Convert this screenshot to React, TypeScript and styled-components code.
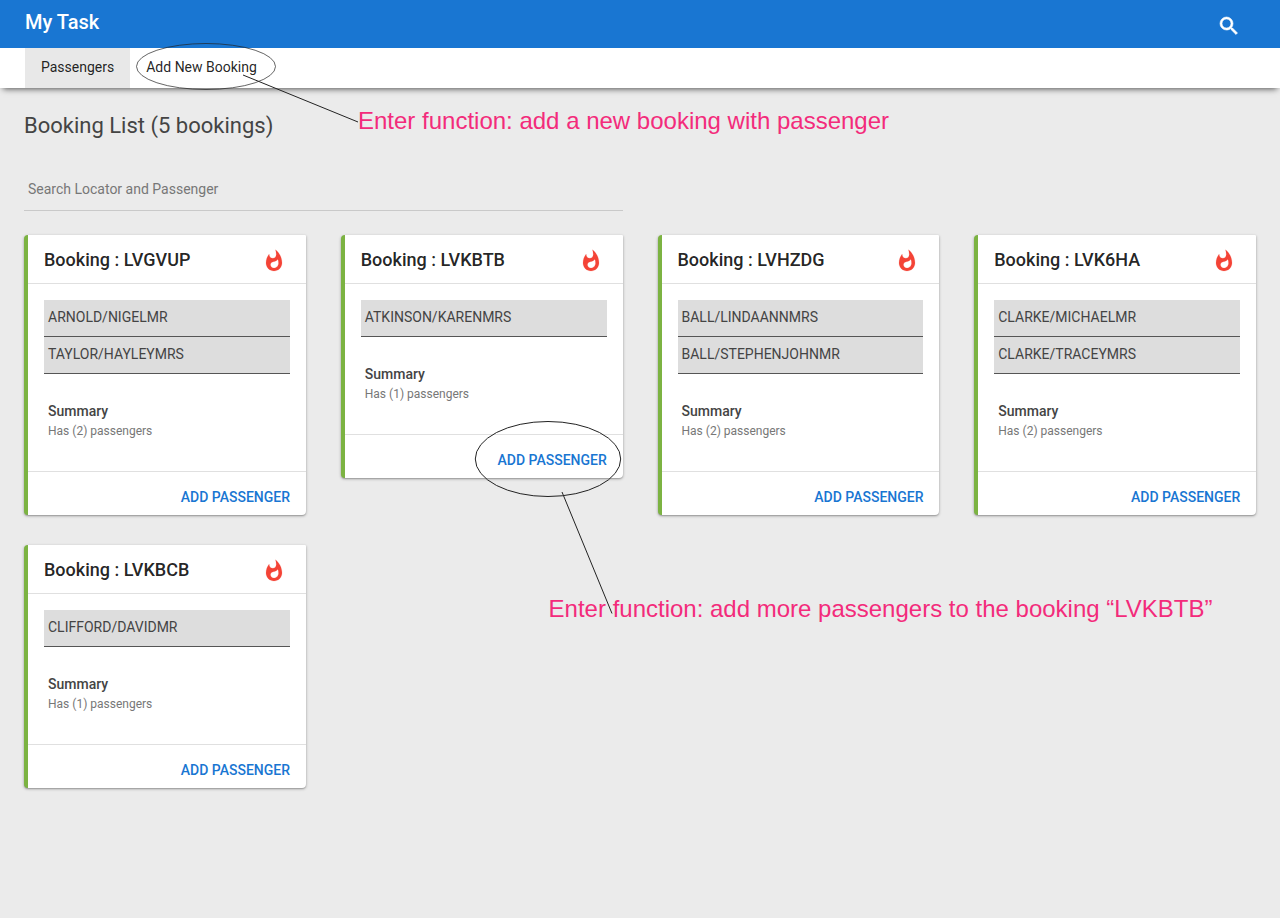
import React from "react";
import styled, { createGlobalStyle } from "styled-components";
import { MdSearch, MdWhatshot } from "react-icons/md";

const GlobalStyle = createGlobalStyle`
  * { box-sizing: border-box; }
  body {
    margin: 0;
    background: #ebebeb;
    font-family: Roboto, "Liberation Sans", sans-serif;
    color: rgba(0, 0, 0, 0.87);
  }
`;

const Page = styled.div`
  position: relative;
  min-height: 918px;
  overflow: hidden;
`;

const Toolbar = styled.header`
  position: relative;
  z-index: 1;
  display: flex;
  align-items: flex-start;
  justify-content: space-between;
  height: 48px;
  padding: 10px 39px 0 25px;
  background: #1976d2;
  color: #fff;
`;

const Brand = styled.h1`
  margin: 0;
  font-size: 20px;
  font-weight: 500;
  line-height: 24px;
`;

const SearchButton = styled.button`
  display: flex;
  margin: 4px 0 0;
  padding: 0;
  border: 0;
  background: none;
  color: inherit;
  path:last-child { stroke: currentColor; stroke-width: 0.6px; }
`;

const Tabs = styled.nav`
  display: flex;
  height: 40px;
  padding-left: 25px;
  background: #fff;
  box-shadow: 0 4px 6px -3px rgba(0, 0, 0, 0.65);
`;

const Tab = styled.a<{ $active?: boolean }>`
  padding: 0 16px;
  background: ${(p) => (p.$active ? "#e8e8e8" : "transparent")};
  font-size: 14px;
  line-height: 39px;
`;

const Content = styled.main`
  padding: 22px 24px 0;
`;

const Heading = styled.h2`
  margin: 0;
  font-size: 22px;
  font-weight: 400;
  line-height: 32px;
  color: #444;
`;

const SearchField = styled.input`
  display: block;
  width: 599px;
  height: 44px;
  margin: 25px 0 24px;
  padding: 0 4px;
  border: 0;
  border-bottom: 1px solid #c9c9c9;
  background: none;
  font: 400 14px Roboto, sans-serif;
  &::placeholder { color: #777; opacity: 1; }
`;

const Cards = styled.section`
  display: grid;
  grid-template-columns: repeat(4, 1fr);
  align-items: start;
  gap: 30px 35px;
`;

const Card = styled.article`
  border-left: 4px solid #7cb342;
  border-radius: 4px 1px 4px 4px;
  background: #fff;
  box-shadow: 0 1px 3px rgba(0, 0, 0, 0.32), 0 1px 1px rgba(0, 0, 0, 0.12);
`;

const CardHeader = styled.header`
  display: flex;
  justify-content: space-between;
  height: 49px;
  padding: 0 20px 0 16px;
  border-bottom: 1px solid #e0e0e0;
  svg { margin-top: 14px; color: #f44336; }
  path:last-child { stroke: currentColor; stroke-width: 0.15px; }
`;

const CardTitle = styled.h3`
  margin: 0;
  font-size: 18px;
  font-weight: 500;
  line-height: 49px;
`;

const CardBody = styled.div`
  padding: 16px 16px 30px;
`;

const Passenger = styled.div`
  height: 37px;
  padding: 0 4px;
  border-bottom: 1px solid #555;
  background: #ddd;
  color: #444;
  font-size: 14px;
  line-height: 34px;
`;

const Summary = styled.div`
  padding: 27px 4px 0;
  color: #777;
  font-size: 12px;
  line-height: 20px;
`;

const SummaryTitle = styled.div`
  color: #444;
  font-size: 14px;
  font-weight: 500;
`;

const CardFooter = styled.footer`
  display: flex;
  justify-content: flex-end;
  height: 44px;
  padding: 14px 15.7px 0 16px;
  border-top: 1px solid #e0e0e0;
`;

const AddButton = styled.button`
  height: 22px;
  padding: 0;
  border: 0;
  background: none;
  color: #1976d2;
  font: 500 14px/22px Roboto, sans-serif;
`;

const Markup = styled.svg`
  position: absolute;
  inset: 0;
  z-index: 2;
  pointer-events: none;
`;

const Note = styled.p<{ $x: number; $y: number }>`
  position: absolute;
  left: ${(p) => p.$x}px;
  top: ${(p) => p.$y}px;
  margin: 0;
  color: #f32b7b;
  font: 24px/28px "Liberation Sans", Arial, sans-serif;
  white-space: nowrap;
`;

const bookings = [
  { locator: "LVGVUP", passengers: ["ARNOLD/NIGELMR", "TAYLOR/HAYLEYMRS"] },
  { locator: "LVKBTB", passengers: ["ATKINSON/KARENMRS"] },
  { locator: "LVHZDG", passengers: ["BALL/LINDAANNMRS", "BALL/STEPHENJOHNMR"] },
  { locator: "LVK6HA", passengers: ["CLARKE/MICHAELMR", "CLARKE/TRACEYMRS"] },
  { locator: "LVKBCB", passengers: ["CLIFFORD/DAVIDMR"] },
];

export default function App() {
  return (
    <Page>
      <GlobalStyle />
      <Toolbar>
        <Brand>My Task</Brand>
        <SearchButton aria-label="Search"><MdSearch size={24} /></SearchButton>
      </Toolbar>
      <Tabs>
        <Tab $active>Passengers</Tab>
        <Tab>Add New Booking</Tab>
      </Tabs>
      <Content>
        <Heading>Booking List ({bookings.length} bookings)</Heading>
        <SearchField placeholder="Search Locator and Passenger" />
        <Cards>
          {bookings.map(({ locator, passengers }) => (
            <Card key={locator}>
              <CardHeader>
                <CardTitle>Booking : {locator}</CardTitle>
                <MdWhatshot size={24} />
              </CardHeader>
              <CardBody>
                {passengers.map((name) => <Passenger key={name}>{name}</Passenger>)}
                <Summary>
                  <SummaryTitle>Summary</SummaryTitle>
                  Has ({passengers.length}) passengers
                </Summary>
              </CardBody>
              <CardFooter><AddButton>ADD PASSENGER</AddButton></CardFooter>
            </Card>
          ))}
        </Cards>
      </Content>
      <Markup width="1280" height="918" fill="none" stroke="#222">
        <ellipse cx="206" cy="66.5" rx="69.5" ry="23" strokeWidth="0.7" />
        <path d="M243 75L358 122" />
        <ellipse cx="548" cy="459" rx="72.7" ry="37.5" />
        <path d="M562 492L612 613.5" />
      </Markup>
      <Note $x={358} $y={107}>Enter function: add a new booking with passenger</Note>
      <Note $x={548.6} $y={595}>Enter function: add more passengers to the booking “LVKBTB”</Note>
    </Page>
  );
}
